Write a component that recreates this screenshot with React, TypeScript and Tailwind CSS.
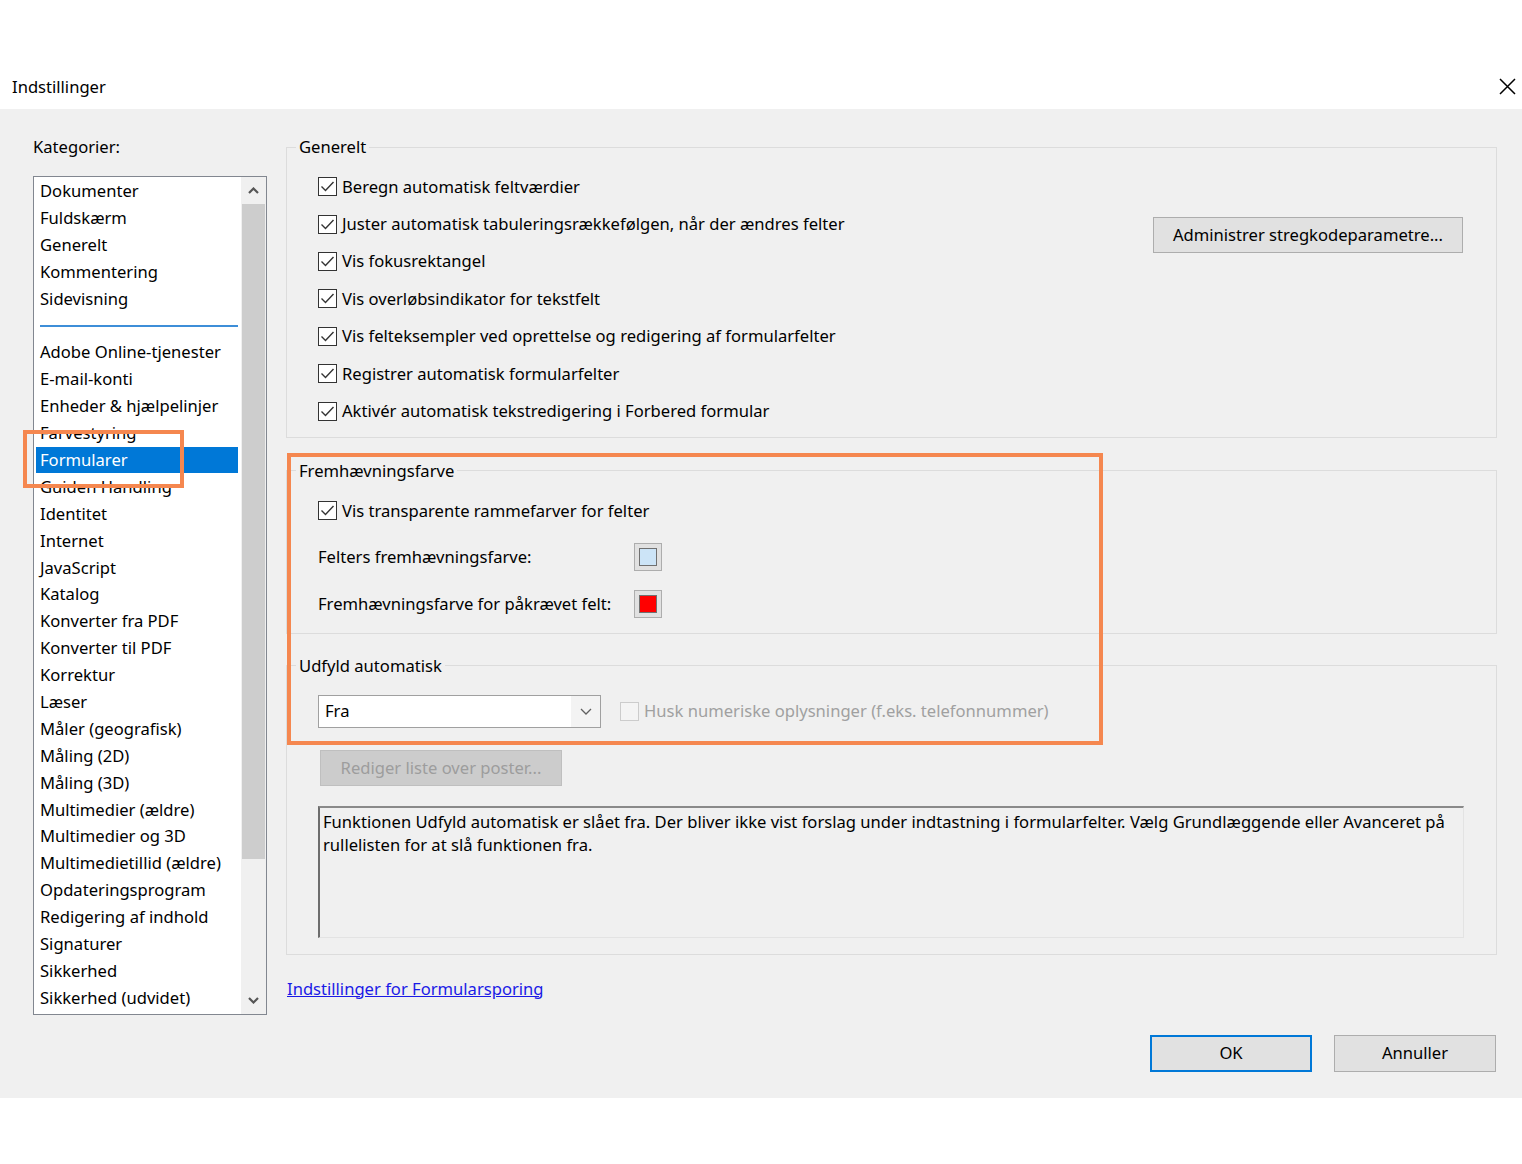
import type { ReactNode } from "react";

const topCategories = ["Dokumenter", "Fuldskærm", "Generelt", "Kommentering", "Sidevisning"];

const categories = [
  "Adobe Online-tjenester",
  "E-mail-konti",
  "Enheder & hjælpelinjer",
  "Farvestyring",
  "Formularer",
  "Guiden Handling",
  "Identitet",
  "Internet",
  "JavaScript",
  "Katalog",
  "Konverter fra PDF",
  "Konverter til PDF",
  "Korrektur",
  "Læser",
  "Måler (geografisk)",
  "Måling (2D)",
  "Måling (3D)",
  "Multimedier (ældre)",
  "Multimedier og 3D",
  "Multimedietillid (ældre)",
  "Opdateringsprogram",
  "Redigering af indhold",
  "Signaturer",
  "Sikkerhed",
  "Sikkerhed (udvidet)",
];

const generalOptions = [
  "Beregn automatisk feltværdier",
  "Juster automatisk tabuleringsrækkefølgen, når der ændres felter",
  "Vis fokusrektangel",
  "Vis overløbsindikator for tekstfelt",
  "Vis felteksempler ved oprettelse og redigering af formularfelter",
  "Registrer automatisk formularfelter",
  "Aktivér automatisk tekstredigering i Forbered formular",
];

function CheckBox({ checked, disabled }: { checked?: boolean; disabled?: boolean }) {
  return (
    <svg width="19" height="19" viewBox="0 0 19 19" className="shrink-0">
      <rect
        x="0.5"
        y="0.5"
        width="18"
        height="18"
        fill={disabled ? "#f4f4f4" : "#ffffff"}
        stroke={disabled ? "#cccccc" : "#333333"}
      />
      {checked && (
        <polyline points="3.5,9.5 7.5,13.5 15.5,5" fill="none" stroke="#333333" strokeWidth="1.4" />
      )}
    </svg>
  );
}

function Chevron({ up }: { up?: boolean }) {
  return (
    <svg width="11" height="7" viewBox="0 0 11 7">
      <polyline
        points={up ? "1,6 5.5,1.5 10,6" : "1,1 5.5,5.5 10,1"}
        fill="none"
        stroke="#555555"
        strokeWidth="2.2"
      />
    </svg>
  );
}

function GroupBox({ title, className, children }: { title: string; className?: string; children: ReactNode }) {
  return (
    <fieldset className={`border border-[#dcdcdc] ${className ?? ""}`}>
      <legend className="ml-[9px] px-[3px] leading-[24px]">{title}</legend>
      {children}
    </fieldset>
  );
}

function Swatch({ color }: { color: string }) {
  return (
    <div className="flex h-[28px] w-[28px] items-center justify-center border border-[#adadad] bg-[#e1e1e1]">
      <div className={`h-[18px] w-[18px] border border-[#707070] ${color}`} />
    </div>
  );
}

function CategoryList() {
  return (
    <div className="flex h-[839px] border border-[#828790] bg-white">
      <div className="mr-[3px] flex-1 pl-[2px]">
        {topCategories.map((c) => (
          <div key={c} className="flex h-[27px] items-center pl-[4px]">
            {c}
          </div>
        ))}
        <div className="flex h-[27px] items-center pl-[4px]">
          <div className="h-[2px] w-full bg-[#3d8ed8]" />
        </div>
        {categories.map((c) => (
          <div
            key={c}
            className={`flex h-[26.9px] items-center pl-[4px] ${c === "Formularer" ? "bg-[#0078d7] text-white" : ""}`}
          >
            {c}
          </div>
        ))}
      </div>
      <div className="flex w-[25px] flex-col bg-[#f0f0f0]">
        <div className="flex h-[27px] items-center justify-center">
          <Chevron up />
        </div>
        <div className="mx-[1px] h-[655px] bg-[#cdcdcd]" />
        <div className="flex-1" />
        <div className="flex h-[27px] items-center justify-center">
          <Chevron />
        </div>
      </div>
    </div>
  );
}

export default function App() {
  return (
    <div
      className="relative h-[1164px] w-[1522px] bg-white text-[16.6px] leading-[24px] text-black"
      style={{ fontFamily: '"Noto Sans", "Open Sans", sans-serif' }}
    >
      <div className="flex h-[109px] items-end justify-between pb-[10px] pl-[12px] pr-[6px]">
        <span>Indstillinger</span>
        <svg width="17" height="17" viewBox="0 0 17 17" className="mb-[4px]">
          <path d="M1 1 L16 16 M16 1 L1 16" stroke="#000" strokeWidth="1.5" />
        </svg>
      </div>

      <div className="flex h-[989px] bg-[#f0f0f0]">
        <div className="ml-[33px] w-[234px] pt-[26px]">
          <div>Kategorier:</div>
          <div className="mt-[17px]">
            <CategoryList />
          </div>
        </div>

        <div className="ml-[19px] w-[1211px] pt-[26px]">
          <GroupBox title="Generelt">
            <div className="flex pb-[7px] pl-[31px] pr-[33px] pt-[9px]">
              <div className="flex-1">
                {generalOptions.map((o) => (
                  <label key={o} className="flex h-[37.4px] items-center gap-[5px]">
                    <CheckBox checked />
                    <span>{o}</span>
                  </label>
                ))}
              </div>
              <div className="pt-[49px]">
                <button className="h-[36px] w-[310px] border border-[#adadad] bg-[#e1e1e1]">
                  Administrer stregkodeparametre...
                </button>
              </div>
            </div>
          </GroupBox>

          <GroupBox title="Fremhævningsfarve" className="mt-[21px]">
            <div className="pb-[5px] pl-[31px] pr-[33px] pt-[5px]">
              <label className="flex h-[46px] items-center gap-[5px]">
                <CheckBox checked />
                <span>Vis transparente rammefarver for felter</span>
              </label>
              <div className="flex h-[46px] items-center">
                <span className="w-[316px]">Felters fremhævningsfarve:</span>
                <Swatch color="bg-[#cce4f7]" />
              </div>
              <div className="flex h-[48px] items-center">
                <span className="w-[316px]">Fremhævningsfarve for påkrævet felt:</span>
                <Swatch color="bg-[#ff0000]" />
              </div>
            </div>
          </GroupBox>

          <GroupBox title="Udfyld automatisk" className="mt-[20px]">
            <div className="pb-[16px] pl-[31px] pr-[32px] pt-[17px]">
              <div className="flex items-center">
                <div className="flex h-[33px] w-[283px] border border-[#a0a0a0] bg-white">
                  <span className="flex flex-1 items-center pl-[6px]">Fra</span>
                  <span className="flex w-[29px] items-center justify-center bg-[#f3f3f3]">
                    <svg width="12" height="7" viewBox="0 0 12 7">
                      <polyline points="1,1 6,6 11,1" fill="none" stroke="#606060" strokeWidth="1.3" />
                    </svg>
                  </span>
                </div>
                <label className="ml-[19px] flex items-center gap-[5px] text-[#a0a0a0]">
                  <CheckBox disabled />
                  <span>Husk numeriske oplysninger (f.eks. telefonnummer)</span>
                </label>
              </div>
              <button
                disabled
                className="ml-[2px] mt-[22px] h-[36px] w-[242px] border border-[#bfbfbf] bg-[#cccccc] text-[#9d9d9d]"
              >
                Rediger liste over poster...
              </button>
              <div className="mt-[20px] h-[132px] whitespace-nowrap border-b border-l-2 border-r border-t-2 border-b-[#e3e3e3] border-l-[#6d6d6d] border-r-[#e3e3e3] border-t-[#8a8a8a] pl-[3px] pt-[2px] leading-[23px]">
                Funktionen Udfyld automatisk er slået fra. Der bliver ikke vist forslag under indtastning i
                formularfelter. Vælg Grundlæggende eller Avanceret på
                <br />
                rullelisten for at slå funktionen fra.
              </div>
            </div>
          </GroupBox>

          <div className="mt-[22px] pl-[1px]">
            <a href="#" className="text-[#1a1ae6] underline">
              Indstillinger for Formularsporing
            </a>
          </div>

          <div className="mt-[34px] flex justify-end gap-[22px] pr-[1px]">
            <button className="h-[37px] w-[162px] border-2 border-[#0078d7] bg-[#e1e1e1]">OK</button>
            <button className="h-[37px] w-[162px] border border-[#adadad] bg-[#e1e1e1]">Annuller</button>
          </div>
        </div>
      </div>

      {/* highlight frames */}
      <div className="absolute left-[23px] top-[430px] h-[58px] w-[161px] border-4 border-[#f5874f]" />
      <div className="absolute left-[287px] top-[453px] h-[292px] w-[816px] border-4 border-[#f5874f]" />
    </div>
  );
}
